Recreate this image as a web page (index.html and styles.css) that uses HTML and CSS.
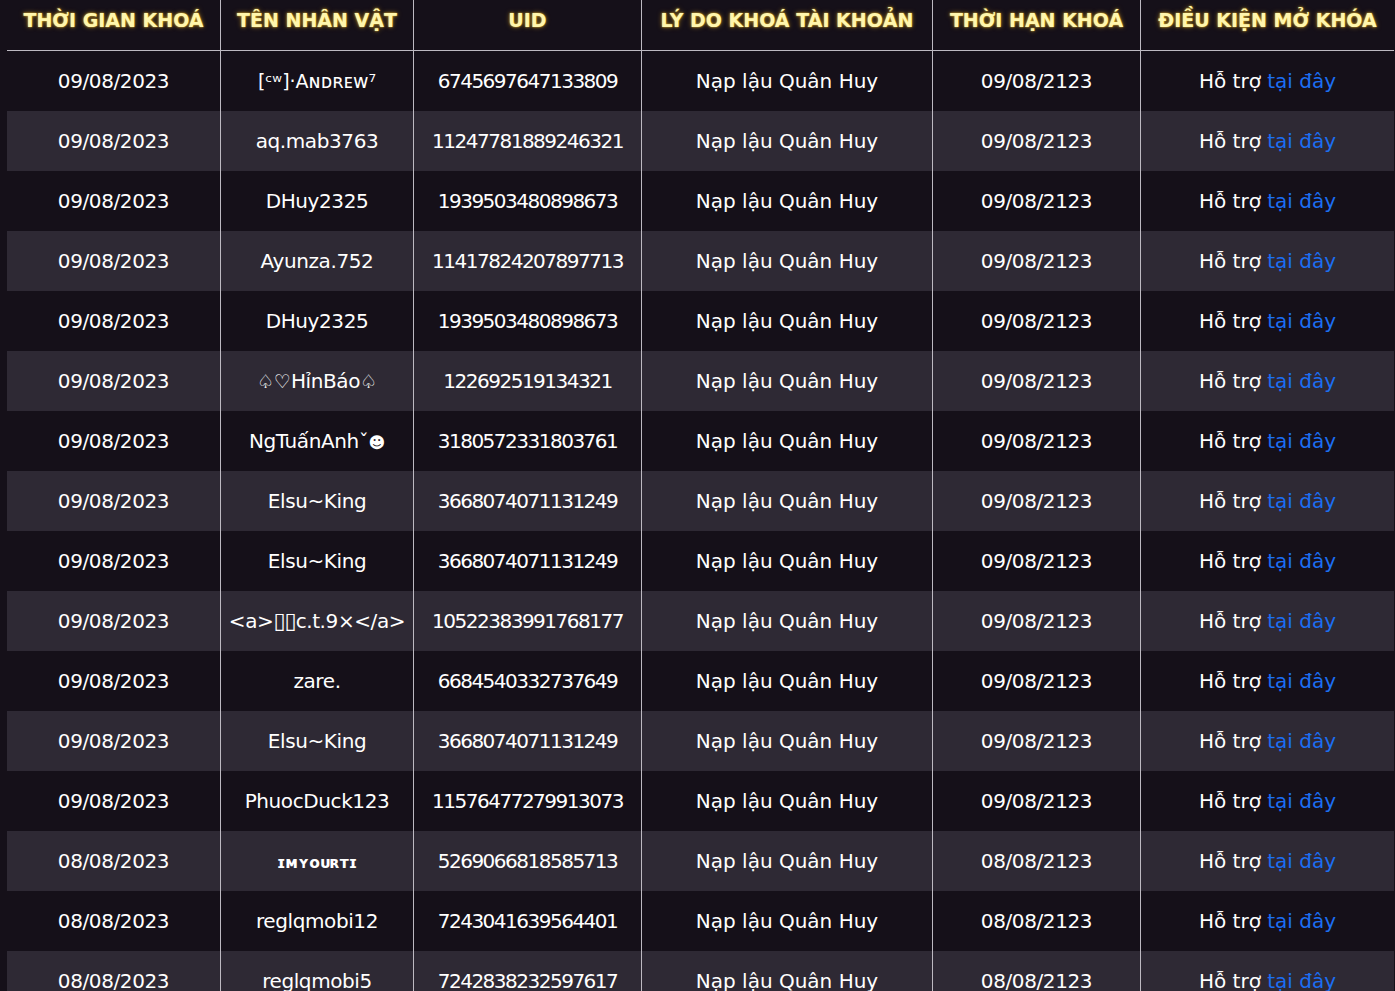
FILE: index.html
```html
<!DOCTYPE html>
<html lang="vi">
<head>
<meta charset="utf-8">
<title>Danh sách khoá tài khoản</title>
<link rel="stylesheet" href="styles.css">
</head>
<body>
<div class="wrap">
<table class="ban-table">
  <colgroup>
    <col class="c1"><col class="c2"><col class="c3"><col class="c4"><col class="c5"><col class="c6">
  </colgroup>
  <thead>
    <tr>
      <th>THỜI GIAN KHOÁ</th>
      <th>TÊN NHÂN VẬT</th>
      <th>UID</th>
      <th>LÝ DO KHOÁ TÀI KHOẢN</th>
      <th>THỜI HẠN KHOÁ</th>
      <th>ĐIỀU KIỆN MỞ KHÓA</th>
    </tr>
  </thead>
  <tbody>
    <tr><td class="num">09/08/2023</td><td class="name"><span class="alt">[ᶜʷ]·Aɴᴅʀᴇᴡ⁷</span></td><td class="uid">6745697647133809</td><td>Nạp lậu Quân Huy</td><td class="num">09/08/2123</td><td>Hỗ trợ <a href="#">tại đây</a></td></tr>
    <tr><td class="num">09/08/2023</td><td class="name">aq.mab3763</td><td class="uid">11247781889246321</td><td>Nạp lậu Quân Huy</td><td class="num">09/08/2123</td><td>Hỗ trợ <a href="#">tại đây</a></td></tr>
    <tr><td class="num">09/08/2023</td><td class="name">DHuy2325</td><td class="uid">1939503480898673</td><td>Nạp lậu Quân Huy</td><td class="num">09/08/2123</td><td>Hỗ trợ <a href="#">tại đây</a></td></tr>
    <tr><td class="num">09/08/2023</td><td class="name">Ayunza.752</td><td class="uid">11417824207897713</td><td>Nạp lậu Quân Huy</td><td class="num">09/08/2123</td><td>Hỗ trợ <a href="#">tại đây</a></td></tr>
    <tr><td class="num">09/08/2023</td><td class="name">DHuy2325</td><td class="uid">1939503480898673</td><td>Nạp lậu Quân Huy</td><td class="num">09/08/2123</td><td>Hỗ trợ <a href="#">tại đây</a></td></tr>
    <tr><td class="num">09/08/2023</td><td class="name"><span class="alt">♤♡</span>HỉnBáo<span class="alt">♤</span></td><td class="uid">122692519134321</td><td>Nạp lậu Quân Huy</td><td class="num">09/08/2123</td><td>Hỗ trợ <a href="#">tại đây</a></td></tr>
    <tr><td class="num">09/08/2023</td><td class="name">NgTuấnAnhˇ<span class="alt smile">☻</span></td><td class="uid">3180572331803761</td><td>Nạp lậu Quân Huy</td><td class="num">09/08/2123</td><td>Hỗ trợ <a href="#">tại đây</a></td></tr>
    <tr><td class="num">09/08/2023</td><td class="name">Elsu~King</td><td class="uid">3668074071131249</td><td>Nạp lậu Quân Huy</td><td class="num">09/08/2123</td><td>Hỗ trợ <a href="#">tại đây</a></td></tr>
    <tr><td class="num">09/08/2023</td><td class="name">Elsu~King</td><td class="uid">3668074071131249</td><td>Nạp lậu Quân Huy</td><td class="num">09/08/2123</td><td>Hỗ trợ <a href="#">tại đây</a></td></tr>
    <tr><td class="num">09/08/2023</td><td class="name">&lt;a&gt;<span class="alt tofu">▯▯</span>c.t.9×&lt;/a&gt;</td><td class="uid">10522383991768177</td><td>Nạp lậu Quân Huy</td><td class="num">09/08/2123</td><td>Hỗ trợ <a href="#">tại đây</a></td></tr>
    <tr><td class="num">09/08/2023</td><td class="name">zare.</td><td class="uid">6684540332737649</td><td>Nạp lậu Quân Huy</td><td class="num">09/08/2123</td><td>Hỗ trợ <a href="#">tại đây</a></td></tr>
    <tr><td class="num">09/08/2023</td><td class="name">Elsu~King</td><td class="uid">3668074071131249</td><td>Nạp lậu Quân Huy</td><td class="num">09/08/2123</td><td>Hỗ trợ <a href="#">tại đây</a></td></tr>
    <tr><td class="num">09/08/2023</td><td class="name">PhuocDuck123</td><td class="uid">11576477279913073</td><td>Nạp lậu Quân Huy</td><td class="num">09/08/2123</td><td>Hỗ trợ <a href="#">tại đây</a></td></tr>
    <tr><td class="num">08/08/2023</td><td class="name"><span class="alt small">ɪᴍʏᴏᴜʀᴛɪ</span></td><td class="uid">5269066818585713</td><td>Nạp lậu Quân Huy</td><td class="num">08/08/2123</td><td>Hỗ trợ <a href="#">tại đây</a></td></tr>
    <tr><td class="num">08/08/2023</td><td class="name">reglqmobi12</td><td class="uid">7243041639564401</td><td>Nạp lậu Quân Huy</td><td class="num">08/08/2123</td><td>Hỗ trợ <a href="#">tại đây</a></td></tr>
    <tr><td class="num">08/08/2023</td><td class="name">reglqmobi5</td><td class="uid">7242838232597617</td><td>Nạp lậu Quân Huy</td><td class="num">08/08/2123</td><td>Hỗ trợ <a href="#">tại đây</a></td></tr>
  </tbody>
</table>
</div>
</body>
</html>
```

FILE: styles.css
```css
html, body {
  margin: 0;
  padding: 0;
  background: #151019;
  overflow: hidden;
}

.wrap {
  padding: 0 1px 0 7px;
}

.ban-table {
  width: 1387px;
  table-layout: fixed;
  border-collapse: separate;
  border-spacing: 0;
  font-family: "DejaVu Sans", sans-serif;
  color: #ffffff;
}

.c1 { width: 213px; }
.c2 { width: 193px; }
.c3 { width: 228px; }
.c4 { width: 291px; }
.c5 { width: 208px; }
.c6 { width: 254px; }

.ban-table th {
  height: 40px;
  padding: 0 0 10px 0;
  line-height: 40px;
  font-size: 19px;
  font-weight: 700;
  color: #fff6ad;
  text-shadow: 0 0 2px rgba(250, 200, 50, 0.95), 0 0 5px rgba(245, 180, 30, 0.55);
  text-align: center;
  white-space: nowrap;
  border-bottom: 1px solid #bdb9c1;
}

.ban-table td {
  height: 60px;
  padding: 0;
  line-height: 60px;
  font-size: 20px;
  text-align: center;
  white-space: nowrap;
  overflow: hidden;
}

.ban-table td.num {
  letter-spacing: -0.4px;
}

.ban-table td.uid {
  letter-spacing: -1.5px;
}

.ban-table td.name {
  letter-spacing: -0.4px;
}

.ban-table th + th,
.ban-table td + td {
  border-left: 1px solid #bdb9c1;
}

.ban-table tbody tr:nth-child(even) td {
  background: #2e2934;
}

.ban-table a {
  color: #1c6ef2;
  text-decoration: none;
}

.alt {
  font-family: "DejaVu Sans", sans-serif;
  line-height: 1;
  font-size: 19px;
  letter-spacing: 0;
}

.small {
  font-size: 15.5px;
  font-weight: 700;
}

.smile {
  font-size: 16px;
}

.tofu {
  font-size: 22px;
  letter-spacing: -1px;
}
```
